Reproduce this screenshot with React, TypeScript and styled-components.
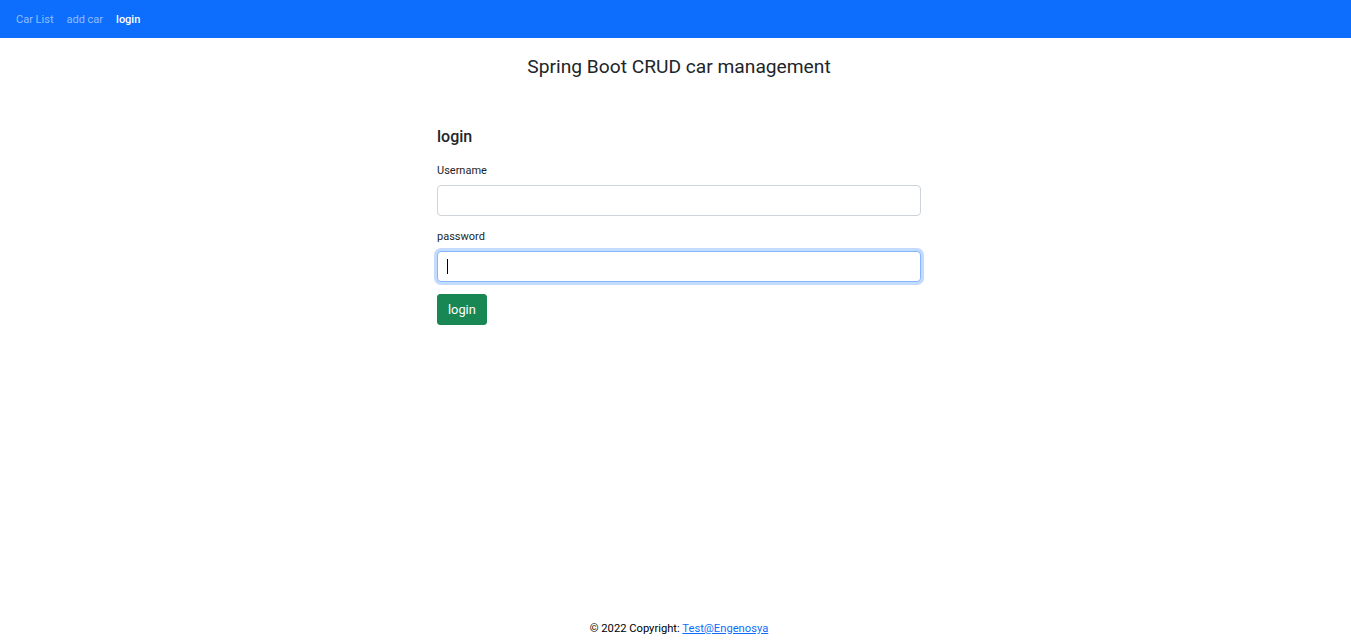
import React from "react";
import styled, { createGlobalStyle } from "styled-components";

const Global = createGlobalStyle`
  * { box-sizing: border-box; }
  html, body { margin: 0; padding: 0; }
  body {
    font-family: Roboto, "Liberation Sans", sans-serif;
    color: #212529;
    background: #fff;
    font-size: 12px;
  }
`;

const Page = styled.div`
  display: flex;
  flex-direction: column;
  min-height: 100vh;
`;

const NavBar = styled.nav`
  height: 38px;
  background: #0d6efd;
  display: flex;
  align-items: center;
  padding: 0 16px;
  gap: 13px;
`;

const NavLink = styled.a<{ $active?: boolean }>`
  font-size: 11px;
  text-decoration: none;
  color: ${(p) => (p.$active ? "#fff" : "rgba(255,255,255,0.55)")};
  font-weight: ${(p) => (p.$active ? 500 : 400)};
  line-height: 1;
`;

const Main = styled.main`
  padding-left: 7px;
  display: flex;
  flex-direction: column;
`;

const Title = styled.h1`
  margin: 17px 0 0;
  text-align: center;
  font-size: 19.2px;
  font-weight: 400;
  line-height: 24px;
  color: #212529;
`;

const FormBox = styled.form`
  width: 484px;
  margin: 48px auto 0;
  display: flex;
  flex-direction: column;
`;

const FormTitle = styled.h2`
  margin: 0 0 17px;
  font-size: 16px;
  font-weight: 500;
  line-height: 20px;
`;

const Label = styled.label`
  font-size: 11px;
  line-height: 14px;
  margin-bottom: 7px;
`;

const Field = styled.div`
  position: relative;
  margin-bottom: 14px;
`;

const Input = styled.input<{ $focus?: boolean }>`
  display: block;
  width: 100%;
  height: 31px;
  padding: 0 9px;
  font-family: inherit;
  font-size: 12px;
  border-radius: 4px;
  border: 1px solid ${(p) => (p.$focus ? "#86b7fe" : "#ced4da")};
  box-shadow: ${(p) => (p.$focus ? "0 0 0 3px rgba(13,110,253,0.25)" : "none")};
  outline: none;
  background: #fff;
`;

const Caret = styled.span`
  position: absolute;
  left: 10px;
  top: 8px;
  width: 1px;
  height: 15px;
  background: #000;
`;

const Button = styled.button`
  align-self: flex-start;
  height: 31px;
  padding: 0 10px;
  border: 1px solid #198754;
  border-radius: 3px;
  background: #198754;
  color: #fff;
  font-family: inherit;
  font-size: 12.8px;
  margin-top: -2px;
`;

const Footer = styled.footer`
  margin-top: auto;
  padding: 0 0 8px 7px;
  text-align: center;
  font-size: 11.2px;
  line-height: 14px;
  color: #000;
`;

const FooterLink = styled.a`
  color: #0d6efd;
  text-decoration: underline;
`;

export default function App() {
  return (
    <Page>
      <Global />
      <NavBar>
        <NavLink href="#">Car List</NavLink>
        <NavLink href="#">add car</NavLink>
        <NavLink href="#" $active>login</NavLink>
      </NavBar>
      <Main>
        <Title>Spring Boot CRUD car management</Title>
        <FormBox onSubmit={(e) => e.preventDefault()}>
          <FormTitle>login</FormTitle>
          <Label>Username</Label>
          <Field>
            <Input type="text" />
          </Field>
          <Label>password</Label>
          <Field>
            <Input type="password" $focus />
            <Caret />
          </Field>
          <Button type="submit">login</Button>
        </FormBox>
      </Main>
      <Footer>
        © 2022 Copyright: <FooterLink href="#">Test@Engenosya</FooterLink>
      </Footer>
    </Page>
  );
}
